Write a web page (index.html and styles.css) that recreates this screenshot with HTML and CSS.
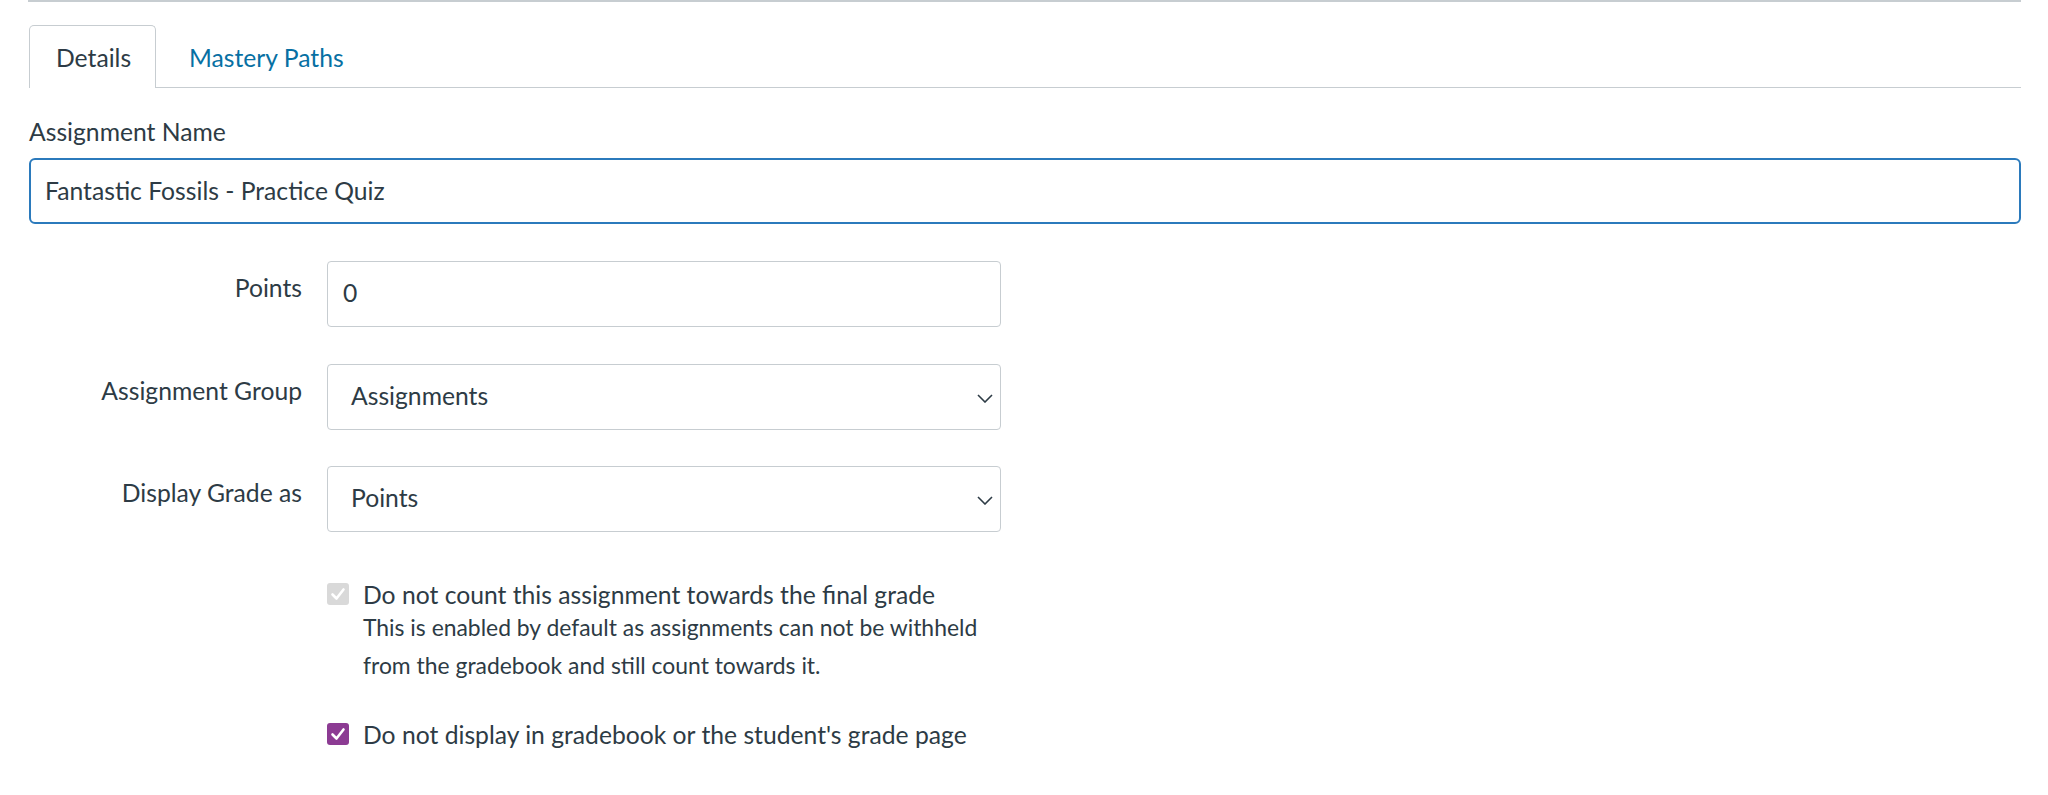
FILE: index.html
```html
<!DOCTYPE html>
<html lang="en">
<head>
<meta charset="utf-8">
<title>Edit Assignment</title>
<link rel="stylesheet" href="styles.css">
</head>
<body>
<div class="page">
  <div class="top-rule"></div>

  <div class="tabs">
    <div class="tab tab-active">Details</div>
    <div class="tab tab-link">Mastery Paths</div>
  </div>

  <div class="name-field">
    <div class="name-label">Assignment Name</div>
    <div class="name-input">Fantastic Fossils - Practice Quiz</div>
  </div>

  <div class="form-rows">
    <div class="form-row">
      <div class="row-label">Points</div>
      <div class="control control-input">0</div>
    </div>
    <div class="form-row">
      <div class="row-label">Assignment Group</div>
      <div class="control control-select">
        <span>Assignments</span>
        <svg class="chevron" width="16" height="9" viewBox="0 0 16 9"><polyline points="1,1 8,8 15,1" fill="none" stroke="#2D3B45" stroke-width="1.6"/></svg>
      </div>
    </div>
    <div class="form-row">
      <div class="row-label">Display Grade as</div>
      <div class="control control-select">
        <span>Points</span>
        <svg class="chevron" width="16" height="9" viewBox="0 0 16 9"><polyline points="1,1 8,8 15,1" fill="none" stroke="#2D3B45" stroke-width="1.6"/></svg>
      </div>
    </div>
  </div>

  <div class="checks">
    <div class="check-item">
      <span class="box box-disabled">
        <svg width="22" height="22" viewBox="0 0 22 22"><polyline points="5.5,11.5 9.5,15.5 16.5,6.5" fill="none" stroke="#fff" stroke-width="2.6" stroke-linecap="round" stroke-linejoin="round"/></svg>
      </span>
      <div class="check-text">
        <div class="check-label">Do not count this assignment towards the final grade</div>
        <div class="check-help">This is enabled by default as assignments can not be withheld<br>from the gradebook and still count towards it.</div>
      </div>
    </div>
    <div class="check-item check-second">
      <span class="box box-checked">
        <svg width="22" height="22" viewBox="0 0 22 22"><polyline points="5.5,11.5 9.5,15.5 16.5,6.5" fill="none" stroke="#fff" stroke-width="2.6" stroke-linecap="round" stroke-linejoin="round"/></svg>
      </span>
      <div class="check-text">
        <div class="check-label">Do not display in gradebook or the student's grade page</div>
      </div>
    </div>
  </div>
</div>
</body>
</html>
```

FILE: styles.css
```css
* { box-sizing: border-box; }

html, body {
  margin: 0;
  padding: 0;
  background: #ffffff;
}

body {
  font-family: "Lato", "Noto Sans", sans-serif;
  font-size: 24.7px;
  color: #2D3B45;
}

.page {
  padding: 0 27px 0 29px;
}

.top-rule {
  height: 2px;
  background: #C7CDD1;
  margin-left: -1px;
}

.tabs {
  display: flex;
  margin-top: 23px;
  border-bottom: 1px solid #C7CDD1;
  height: 63px;
}

.tab {
  height: 63px;
  padding-top: 17px;
  line-height: normal;
}

.tab-active {
  width: 127px;
  padding-left: 26px;
  border: 1px solid #C7CDD1;
  border-bottom: none;
  border-radius: 5px 5px 0 0;
  background: #ffffff;
  margin-bottom: -1px;
}

.tab-link {
  padding-left: 33px;
  color: #0770A3;
  padding-top: 18px;
}

.name-label {
  height: 70px;
  padding-top: 29px;
}

.name-input {
  height: 66px;
  border: 2px solid #2B7ABC;
  border-radius: 6px;
  padding: 16px 14px 0 14px;
  line-height: normal;
}

.form-rows {
  display: flex;
  flex-direction: column;
  gap: 36.5px;
  margin-top: 37px;
}

.form-row {
  display: flex;
  gap: 25px;
}

.row-label {
  width: 273px;
  text-align: right;
  padding-top: 12px;
  line-height: normal;
}

.control {
  width: 674px;
  height: 66px;
  border: 1px solid #C7CDD1;
  border-radius: 4px;
  background: #ffffff;
  line-height: normal;
  display: flex;
  align-items: flex-start;
}

.control-input {
  padding: 16px 15px 0 15px;
}

.control-select {
  padding: 16px 0 0 23px;
  justify-content: space-between;
}

.chevron {
  margin-top: 13px;
  margin-right: 7px;
}

.checks {
  margin-top: 47px;
  padding-left: 298px;
}

.check-item {
  display: flex;
  align-items: flex-start;
  gap: 14px;
}

.check-second {
  margin-top: 35px;
}

.box {
  width: 22px;
  height: 22px;
  border-radius: 3px;
  margin-top: 4px;
  flex: none;
  display: flex;
}

.box-disabled {
  background: #D9D9D9;
}

.box-checked {
  background: #8C3B93;
}

.check-label {
  line-height: 32px;
}

.check-help {
  font-size: 22.9px;
  line-height: 38px;
  margin-top: -3px;
}
```
